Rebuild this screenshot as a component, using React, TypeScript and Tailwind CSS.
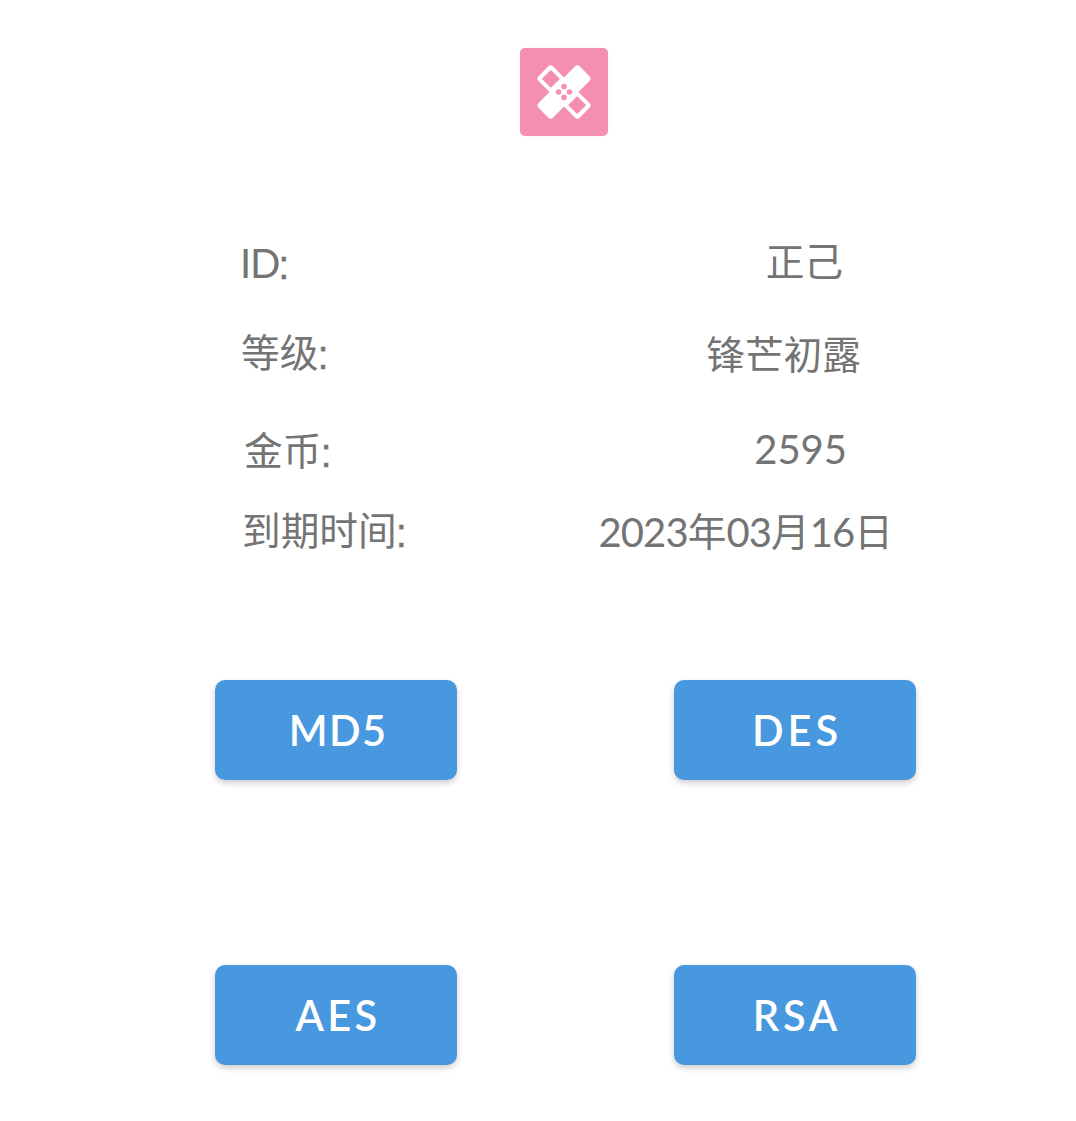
import React from "react";

const CJK = /[\u3400-\u9fff]/;

function MixedText({ text, latin }: { text: string; latin: string }) {
  const runs = text.match(/[\u3400-\u9fff]+|:|[^\u3400-\u9fff:]+/g) ?? [];
  return (
    <span className="flex h-12 items-baseline whitespace-nowrap leading-[48px] text-[#747474]">
      {runs.map((run, i) => {
        if (CJK.test(run)) {
          return (
            <span key={i} className="-translate-y-[2px] font-['Noto_Sans_CJK_SC',sans-serif] text-[38.7px] font-normal leading-[48px]">
              {run}
            </span>
          );
        }
        if (run === ":") {
          return (
            <span key={i} className="-translate-x-px font-['Liberation_Sans',sans-serif] text-[40px] leading-[48px] [-webkit-text-stroke:0.4px_#747474]">
              {run}
            </span>
          );
        }
        return (
          <span key={i} className={`-translate-y-px font-['Lato',sans-serif] leading-[48px] ${latin}`}>
            {run}
          </span>
        );
      })}
    </span>
  );
}

const rows = [
  { label: "ID:", value: "正己", row: "h-[90px]", left: "ml-[240px]", right: "mr-[233px]", lt: "mt-[2px]", rt: "-mt-px", latin: "text-[40px] tracking-[-1.2px]" },
  { label: "等级:", value: "锋芒初露", row: "h-[96px]", left: "ml-[241px]", right: "mr-[215px]", lt: "mt-0", rt: "mt-[2px]", latin: "text-[40px]" },
  { label: "金币:", value: "2595", row: "h-[82px]", left: "ml-[244px]", right: "mr-[229px]", lt: "mt-[2px]", rt: "mt-[2px]", latin: "text-[40px]" },
  { label: "到期时间:", value: "2023年03月16日", row: "h-[86px]", left: "ml-[242px]", right: "mr-[183px]", lt: "mt-0", rt: "mt-px", latin: "text-[40px] tracking-[-0.9px]" },
];

function Bandage() {
  return (
    <svg viewBox="0 0 88 88" className="size-[88px]">
      <g transform="rotate(45 44 44)" fill="#fff">
        <rect x="14.8" y="33.7" width="58.4" height="20.6" rx="3.5" />
        <rect x="33.7" y="14.8" width="20.6" height="58.4" rx="3.5" />
        <rect x="19" y="37.6" width="12.8" height="12.8" rx="0.5" fill="#f48fb1" />
        <rect x="56.2" y="37.6" width="12.8" height="12.8" rx="0.5" fill="#f48fb1" />
      </g>
      <g fill="#f48fb1">
        <circle cx="44" cy="38.6" r="2.8" />
        <circle cx="38.6" cy="44" r="2.8" />
        <circle cx="49.4" cy="44" r="2.8" />
        <circle cx="44" cy="49.4" r="2.8" />
      </g>
    </svg>
  );
}

function ActionButton({ children, spacing }: { children: string; spacing: string }) {
  return (
    <button
      className={`flex h-[100px] w-[242px] items-center justify-center rounded-[10px] bg-[#4898e0] pl-1 pt-0.5 font-['Lato',sans-serif] text-[41.5px] font-semibold leading-none text-white shadow-[0_3px_6px_rgba(0,0,0,0.2)] ${spacing}`}
    >
      {children}
    </button>
  );
}

export default function App() {
  return (
    <main className="flex h-[1121px] w-[1076px] flex-col overflow-hidden bg-white">
      <div className="ml-[520px] mt-12 size-[88px] shrink-0 overflow-hidden rounded-[5px] bg-[#f48fb1] shadow-[0_0_6px_rgba(0,0,0,0.03)]">
        <Bandage />
      </div>
      <section className="mt-[102px] flex h-[442px] shrink-0 flex-col">
        {rows.map((r) => (
          <div key={r.label} className={`flex shrink-0 items-start justify-between ${r.row}`}>
            <div className={`${r.left} ${r.lt}`}>
              <MixedText text={r.label} latin={r.latin} />
            </div>
            <div className={`${r.right} ${r.rt}`}>
              <MixedText text={r.value} latin={r.latin} />
            </div>
          </div>
        ))}
      </section>
      <section className="ml-[215px] grid w-[701px] shrink-0 grid-cols-[242px_242px] justify-between gap-y-[185px]">
        <ActionButton spacing="tracking-[1.4px]">MD5</ActionButton>
        <ActionButton spacing="tracking-[4px]">DES</ActionButton>
        <ActionButton spacing="tracking-[3.4px]">AES</ActionButton>
        <ActionButton spacing="tracking-[3.8px]">RSA</ActionButton>
      </section>
    </main>
  );
}
